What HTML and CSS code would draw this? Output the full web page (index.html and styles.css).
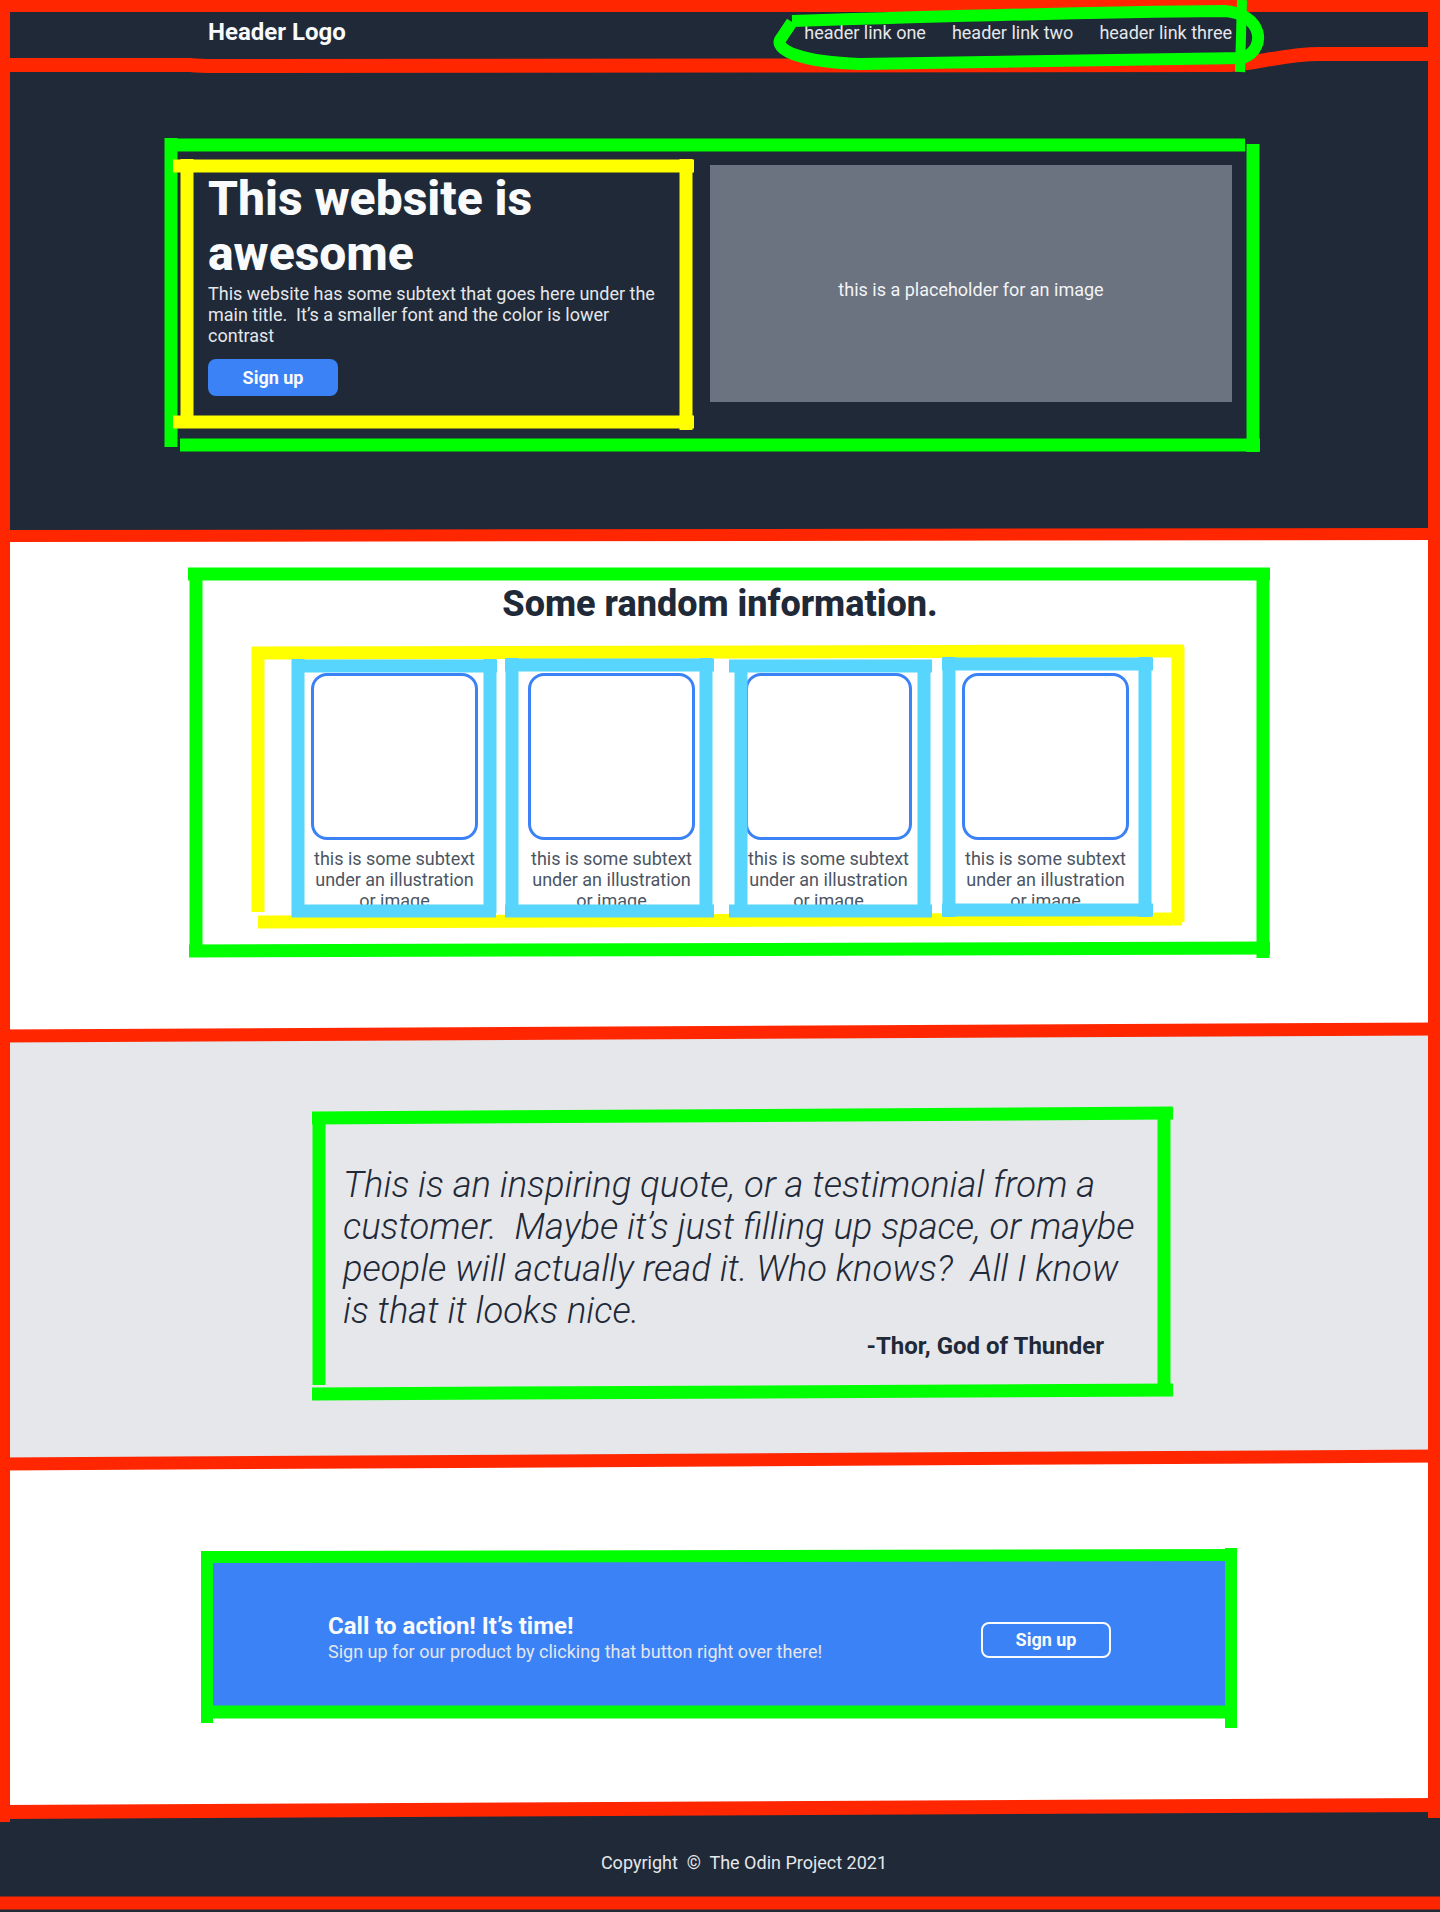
FILE: index.html
```html
<!DOCTYPE html>
<html lang="en">
<head>
<meta charset="utf-8">
<title>Landing page</title>
<link rel="stylesheet" href="styles.css">
</head>
<body>
<div class="page">
  <header class="site-header">
    <div class="container header-inner">
      <div class="logo">Header Logo</div>
      <nav class="nav">
        <a href="#">header link one</a>
        <a href="#">header link two</a>
        <a href="#">header link three</a>
      </nav>
    </div>
  </header>

  <section class="hero">
    <div class="container hero-inner">
      <div class="hero-text">
        <h1 class="hero-title">This website is awesome</h1>
        <p class="hero-sub">This website has some subtext that goes here under the main title.&nbsp; It’s a smaller font and the color is lower contrast</p>
        <a href="#" class="btn">Sign up</a>
      </div>
      <div class="hero-image">this is a placeholder for an image</div>
    </div>
  </section>

  <section class="info">
    <h2 class="info-title">Some random information.</h2>
    <div class="cards">
      <div class="card"><div class="card-img"></div><p class="card-text">this is some subtext under an illustration or image</p></div>
      <div class="card"><div class="card-img"></div><p class="card-text">this is some subtext under an illustration or image</p></div>
      <div class="card"><div class="card-img"></div><p class="card-text">this is some subtext under an illustration or image</p></div>
      <div class="card"><div class="card-img"></div><p class="card-text">this is some subtext under an illustration or image</p></div>
    </div>
  </section>

  <section class="quote">
    <div class="quote-inner">
      <p class="quote-text">This is an inspiring quote, or a testimonial from a customer.&nbsp; Maybe it’s just filling up space, or maybe people will actually read it. Who knows?&nbsp; All I know is that it looks nice.</p>
      <p class="quote-author">-Thor, God of Thunder</p>
    </div>
  </section>

  <section class="cta-section">
    <div class="cta">
      <div class="cta-text">
        <h3 class="cta-title">Call to action! It’s time!</h3>
        <p class="cta-sub">Sign up for our product by clicking that button right over there!</p>
      </div>
      <a href="#" class="btn-outline">Sign up</a>
    </div>
  </section>

  <footer class="site-footer">Copyright&nbsp; ©&nbsp; The Odin Project 2021</footer>

  <svg class="marks" width="1440" height="1912" viewBox="0 0 1440 1912" aria-hidden="true">
    <g fill="none" stroke-linecap="butt" stroke-linejoin="round">
      <g stroke="#ff2600">
        <path d="M0 6 H1440" stroke-width="12"/>
        <path d="M5 0 V1822" stroke-width="10"/>
        <path d="M1434 0 V1818" stroke-width="12"/>
        <path d="M0 65 L190 65 C200 66 205 66 215 66 L1230 65 C1260 63 1285 54 1320 54 L1440 54" stroke-width="14"/>
        <path d="M0 536 L1440 534" stroke-width="12"/>
        <path d="M0 1036 L1440 1029" stroke-width="13"/>
        <path d="M0 1464 L1440 1456" stroke-width="13"/>
        <path d="M0 1812 L1440 1805" stroke-width="14"/>
        <path d="M0 1903 H1440" stroke-width="13"/>
      </g>
      <g stroke="#00ff00" stroke-width="13">
        <path d="M792 21 C950 16 1100 12 1225 11 C1262 14 1268 48 1243 58 L860 64 C800 62 776 50 780 40 L792 22" stroke-width="12"/>
        <path d="M1242 0 L1240 72" stroke-width="10"/>
        <path d="M166 145 H1245"/>
        <path d="M171 138 V447"/>
        <path d="M180 445 H1260"/>
        <path d="M1253 144 V452"/>
        <path d="M188 574 H1270"/>
        <path d="M196 568 V955"/>
        <path d="M1263 568 V958"/>
        <path d="M189 951 L1270 948"/>
        <path d="M312 1118 L1173 1113"/>
        <path d="M319 1112 V1385"/>
        <path d="M1164 1107 V1392"/>
        <path d="M312 1394 L1173 1390"/>
        <path d="M201 1557 L1237 1555" stroke-width="12"/>
        <path d="M207 1551 V1723" stroke-width="12"/>
        <path d="M1231 1548 V1728" stroke-width="12"/>
        <path d="M201 1712 L1237 1712"/>
      </g>
      <g stroke="#ffff00" stroke-width="13">
        <path d="M173 166 H694"/>
        <path d="M187 159 V416"/>
        <path d="M686 159 V430"/>
        <path d="M173 422 H694"/>
        <path d="M252 653 L1184 651"/>
        <path d="M258 647 V912"/>
        <path d="M1178 647 V922"/>
        <path d="M258 922 L1182 919"/>
      </g>
      <g stroke="#57d5fd" stroke-width="13">
        <path d="M292 666 H497"/>
        <path d="M298 659 V917"/>
        <path d="M490 659 V913"/>
        <path d="M292 911 H496"/>
        <path d="M505 665 H714"/>
        <path d="M512 658 V917"/>
        <path d="M706 658 V917"/>
        <path d="M505 911 H714"/>
        <path d="M729 666 H932"/>
        <path d="M741 660 V917"/>
        <path d="M924 660 V917"/>
        <path d="M729 911 H932"/>
        <path d="M942 664 H1153"/>
        <path d="M949 657 V917"/>
        <path d="M1145 657 V917"/>
        <path d="M942 910 H1153"/>
      </g>
    </g>
  </svg>
</div>
</body>
</html>
```

FILE: styles.css
```css
* { box-sizing: border-box; }

html, body {
  margin: 0;
  padding: 0;
}

body {
  background: #ffffff;
  font-family: Roboto, "Noto Sans", "Liberation Sans", sans-serif;
  line-height: normal;
}

.page {
  position: relative;
  width: 1440px;
  height: 1912px;
  overflow: hidden;
}

.container {
  width: 1024px;
  margin: 0 auto;
}

/* header */
.site-header {
  background: #1f2937;
  height: 64px;
}

.header-inner {
  height: 100%;
  display: flex;
  align-items: center;
  justify-content: space-between;
}

.logo {
  color: #f9fafb;
  font-size: 24px;
  font-weight: 700;
}

.nav {
  display: flex;
  gap: 26px;
}

.nav a {
  color: #e5e7eb;
  font-size: 18px;
  text-decoration: none;
}

/* hero */
.hero {
  background: #1f2937;
  height: 473px;
  padding-top: 101px;
}

.hero-inner {
  display: flex;
  align-items: center;
  justify-content: space-between;
}

.hero-text {
  width: 458px;
}

.hero-title {
  margin: 0;
  color: #f9fafb;
  font-size: 48px;
  font-weight: 800;
  line-height: 55px;
}

.hero-sub {
  margin: 2px 0 0;
  color: #e5e7eb;
  font-size: 18px;
  line-height: 21px;
}

.btn {
  display: inline-block;
  margin-top: 13px;
  width: 130px;
  height: 37px;
  line-height: 37px;
  text-align: center;
  background: #3b82f6;
  color: #f9fafb;
  border-radius: 8px;
  font-size: 18px;
  font-weight: 700;
  text-decoration: none;
}

.hero-image {
  width: 522px;
  height: 237px;
  padding-top: 12px;
  background: #6b7280;
  color: #f3f4f6;
  font-size: 18px;
  display: flex;
  align-items: center;
  justify-content: center;
}

/* info */
.info {
  background: #ffffff;
  height: 497px;
  padding-top: 46px;
}

.info-title {
  margin: 0;
  text-align: center;
  color: #1f2937;
  font-size: 36px;
  font-weight: 800;
}

.cards {
  margin-top: 48px;
  display: flex;
  justify-content: center;
  gap: 50px;
}

.card {
  width: 167px;
}

.card-img {
  width: 167px;
  height: 167px;
  border: 3px solid #3b82f6;
  border-radius: 16px;
}

.card-text {
  margin: 8px 0 0;
  text-align: center;
  color: #4b5563;
  font-size: 18px;
  line-height: 21px;
}

/* quote */
.quote {
  background: #e5e7eb;
  height: 428px;
  padding-top: 130px;
}

.quote-inner {
  width: 800px;
  margin-left: 343px;
}

.quote-text {
  margin: 0;
  color: #1f2937;
  font-size: 36.4px;
  font-style: italic;
  font-weight: 300;
  line-height: 42px;
}

.quote-author {
  margin: 0;
  padding-right: 39px;
  text-align: right;
  color: #1f2937;
  font-size: 24px;
  font-weight: 700;
}

/* call to action */
.cta-section {
  background: #ffffff;
  height: 350px;
  padding-top: 95px;
}

.cta {
  width: 1024px;
  height: 155px;
  margin: 0 auto;
  padding: 0 121px 0 120px;
  background: #3b82f6;
  border-radius: 8px;
  display: flex;
  align-items: center;
  justify-content: space-between;
}

.cta-text {
  padding-top: 5px;
}

.cta-title {
  margin: 0;
  color: #f9fafb;
  font-size: 24px;
  font-weight: 700;
}

.cta-sub {
  margin: 1px 0 0;
  color: #e5e7eb;
  font-size: 18px;
  font-weight: 400;
  line-height: 21px;
}

.btn-outline {
  display: block;
  margin-top: 10px;
  width: 130px;
  height: 36px;
  line-height: 32px;
  text-align: center;
  border: 2px solid #f9fafb;
  border-radius: 8px;
  color: #f9fafb;
  font-size: 18px;
  font-weight: 700;
  text-decoration: none;
}

/* footer */
.site-footer {
  background: #1f2937;
  height: 100px;
  padding-left: 48px;
  display: flex;
  align-items: center;
  justify-content: center;
  color: #e5e7eb;
  font-size: 18px;
}

/* hand-drawn annotation overlay */
.marks {
  position: absolute;
  top: 0;
  left: 0;
  pointer-events: none;
}
```
